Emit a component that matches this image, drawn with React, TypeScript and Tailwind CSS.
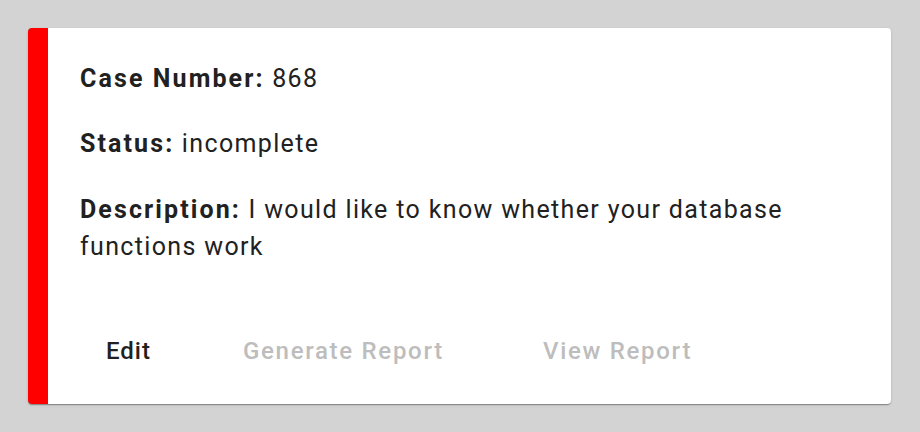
import type React from 'react';

const caseInfo = {
  number: 868,
  status: 'incomplete',
  description: 'I would like to know whether your database functions work',
};

const Field: React.FC<{ label: string; value: React.ReactNode; className?: string }> = ({ label, value, className }) => (
  <p className={`text-[25px] tracking-[1.35px] text-[#212121] ${className ?? ''}`}>
    <span className="font-bold tracking-[2.1px]">{label}:</span> {value}
  </p>
);

const App: React.FC = () => {
  return (
    <div className="min-h-screen w-full bg-[#d3d3d3] pt-[28px] pl-[28px] pr-[29px] pb-[28px]" style={{ fontFamily: 'Roboto, "Liberation Sans", sans-serif' }}>
      <div className="bg-white rounded-[4px] border-l-[20px] border-[#ff0000] shadow-[0px_2px_1px_-1px_rgba(0,0,0,0.2),0px_1px_1px_0px_rgba(0,0,0,0.14),0px_1px_3px_0px_rgba(0,0,0,0.12)]">
        <div className="pt-[33px] pl-[32px] pr-[32px]">
          <Field label="Case Number" value={caseInfo.number} className="leading-[36px]" />
          <Field label="Status" value={caseInfo.status} className="mt-[29px] leading-[36px]" />
          <Field label="Description" value={caseInfo.description} className="mt-[29px] leading-[37px]" />
        </div>
        <div className="flex items-center mt-[68px] pb-[35px] pl-[58px] text-[24px] leading-[36px] font-medium tracking-[1.7px]">
          <button className="w-[137px] text-left text-[#212121] tracking-[1px]">Edit</button>
          <button className="w-[300px] text-left text-[#bdbdbd]" disabled>
            Generate Report
          </button>
          <button className="text-left text-[#bdbdbd]" disabled>
            View Report
          </button>
        </div>
      </div>
    </div>
  );
};

export default App;
